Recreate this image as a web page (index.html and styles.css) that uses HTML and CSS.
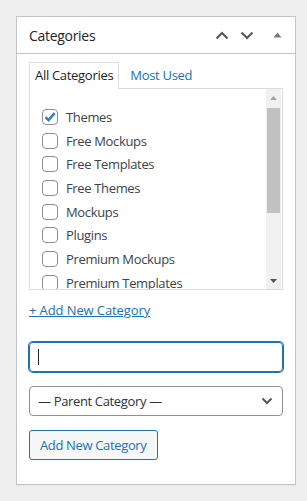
FILE: index.html
```html
<!DOCTYPE html>
<html lang="en">
<head>
    <meta charset="UTF-8">
    <meta name="viewport" content="width=device-width, initial-scale=1.0">
    <title>Categories</title>
    <link rel="stylesheet" href="styles.css">
</head>
<body>

<div class="postbox">
    <div class="postbox-header">
        <h2>Categories</h2>
        <div class="handle-actions">
            <span class="handle-btn">
                <svg width="14" height="9" viewBox="0 0 14 9"><path d="M1.5 7.5 L7 2 L12.5 7.5" fill="none" stroke="#50575e" stroke-width="2"/></svg>
            </span>
            <span class="handle-btn">
                <svg width="14" height="9" viewBox="0 0 14 9"><path d="M1.5 1.5 L7 7 L12.5 1.5" fill="none" stroke="#50575e" stroke-width="2"/></svg>
            </span>
            <span class="handle-btn toggle">
                <svg width="9" height="6" viewBox="0 0 9 6"><path d="M0.5 5.5 L4.5 0.5 L8.5 5.5 Z" fill="#787c82"/></svg>
            </span>
        </div>
    </div>

    <div class="inside">
        <ul class="category-tabs">
            <li class="tabs">All Categories</li>
            <li><a href="#">Most Used</a></li>
        </ul>

        <div class="tabs-panel">
            <ul class="categorychecklist">
                <li><span class="cb checked"><svg width="14" height="14" viewBox="0 0 14 14"><path d="M2.5 7.2 L5.6 10.2 L11.6 3.2" fill="none" stroke="#3582c4" stroke-width="2.6"/></svg></span>Themes</li>
                <li><span class="cb"></span>Free Mockups</li>
                <li><span class="cb"></span>Free Templates</li>
                <li><span class="cb"></span>Free Themes</li>
                <li><span class="cb"></span>Mockups</li>
                <li><span class="cb"></span>Plugins</li>
                <li><span class="cb"></span>Premium Mockups</li>
                <li><span class="cb"></span>Premium Templates</li>
            </ul>
            <div class="scrollbar">
                <div class="sb-arrow"><svg width="7" height="4" viewBox="0 0 7 4"><path d="M0 4 L3.5 0 L7 4 Z" fill="#a3a3a3"/></svg></div>
                <div class="sb-track">
                    <div class="sb-thumb"></div>
                </div>
                <div class="sb-arrow"><svg width="7" height="4" viewBox="0 0 7 4"><path d="M0 0 L3.5 4 L7 0 Z" fill="#505050"/></svg></div>
            </div>
        </div>

        <div class="add-row">
            <a href="#" class="add-link">+ Add New Category</a>
        </div>

        <div class="new-category">
            <div class="text-input"><span class="caret"></span></div>
            <div class="select-box">
                <span>— Parent Category —</span>
                <svg width="12" height="8" viewBox="0 0 12 8"><path d="M1.5 1.5 L6 6 L10.5 1.5" fill="none" stroke="#50575e" stroke-width="2"/></svg>
            </div>
            <div><button class="button">Add New Category</button></div>
        </div>
    </div>
</div>

</body>
</html>
```

FILE: styles.css
```css
body {
    background-color: #f0f0f1;
    margin: 0;
    padding: 16px 11px 16px 16px;
    font-family: "Open Sans", "Noto Sans", sans-serif;
    font-size: 13px;
    color: #3c434a;
}

.postbox {
    width: 278px;
    background: #fff;
    border: 1px solid #c3c4c7;
    box-shadow: 0 1px 1px rgba(0, 0, 0, 0.04);
}

.postbox-header {
    height: 36px;
    border-bottom: 1px solid #c3c4c7;
    display: flex;
    align-items: center;
    justify-content: space-between;
    padding-left: 12px;
}

.postbox-header h2 {
    margin: 0;
    font-size: 14px;
    font-weight: 400;
    color: #1d2327;
    letter-spacing: -0.3px;
}

.handle-actions {
    display: flex;
    align-items: center;
}

.handle-btn {
    width: 25px;
    height: 36px;
    display: flex;
    align-items: center;
    justify-content: center;
}

.handle-btn.toggle {
    width: 36px;
}

.inside {
    padding: 8px 12px 24px 12px;
}

.category-tabs {
    list-style: none;
    margin: 0;
    padding: 0;
    display: flex;
    position: relative;
    z-index: 1;
}

.category-tabs li {
    height: 25px;
    line-height: 25px;
    padding: 0 5px;
    margin-right: 5px;
    letter-spacing: -0.3px;
    border: 1px solid transparent;
    border-bottom: none;
}

.category-tabs li.tabs {
    border-color: #dcdcde;
    background: #fff;
    color: #1d2327;
    height: 26px;
}

.category-tabs a {
    color: #2271b1;
    text-decoration: none;
}

.tabs-panel {
    height: 200px;
    border: 1px solid #dcdcde;
    margin-top: -1px;
    display: flex;
    overflow: hidden;
}

.categorychecklist {
    list-style: none;
    margin: 0;
    padding: 16px 0 0 12px;
    flex: 1;
}

.categorychecklist li {
    height: 23.7px;
    display: flex;
    align-items: center;
    letter-spacing: -0.35px;
    color: #3c434a;
}

.cb {
    width: 16px;
    height: 16px;
    box-sizing: border-box;
    border: 1px solid #8c8f94;
    border-radius: 4px;
    margin-right: 8px;
    display: flex;
    align-items: center;
    justify-content: center;
    flex-shrink: 0;
}

.scrollbar {
    width: 15px;
    margin-right: 1px;
    display: flex;
    flex-direction: column;
    background: #f1f1f1;
}

.sb-arrow {
    height: 17px;
    display: flex;
    align-items: center;
    justify-content: center;
}

.sb-track {
    flex: 1;
}

.sb-thumb {
    margin: 2px 1px 0 1px;
    height: 105px;
    background: #c1c1c1;
}

.add-row {
    margin-top: 10px;
    height: 20px;
    line-height: 20px;
}

.add-link {
    color: #2271b1;
    text-decoration: underline;
    font-weight: 500;
    letter-spacing: -0.1px;
}

.new-category {
    margin-top: 22px;
    display: flex;
    flex-direction: column;
    gap: 14px;
}

.text-input {
    height: 30px;
    box-sizing: border-box;
    border: 1px solid #2271b1;
    box-shadow: 0 0 0 1px #2271b1;
    border-radius: 4px;
    display: flex;
    align-items: center;
    padding-left: 8px;
}

.caret {
    width: 1px;
    height: 16px;
    background: #1d2327;
}

.select-box {
    height: 30px;
    box-sizing: border-box;
    border: 1px solid #8c8f94;
    border-radius: 4px;
    display: flex;
    align-items: center;
    justify-content: space-between;
    padding: 0 9px 0 8px;
    color: #2c3338;
    letter-spacing: -0.35px;
}

.button {
    height: 30px;
    padding: 0 10px;
    background: #f6f7f7;
    border: 1px solid #2271b1;
    border-radius: 3px;
    color: #2271b1;
    font-family: inherit;
    font-size: 13px;
    letter-spacing: -0.35px;
    cursor: pointer;
}
```
